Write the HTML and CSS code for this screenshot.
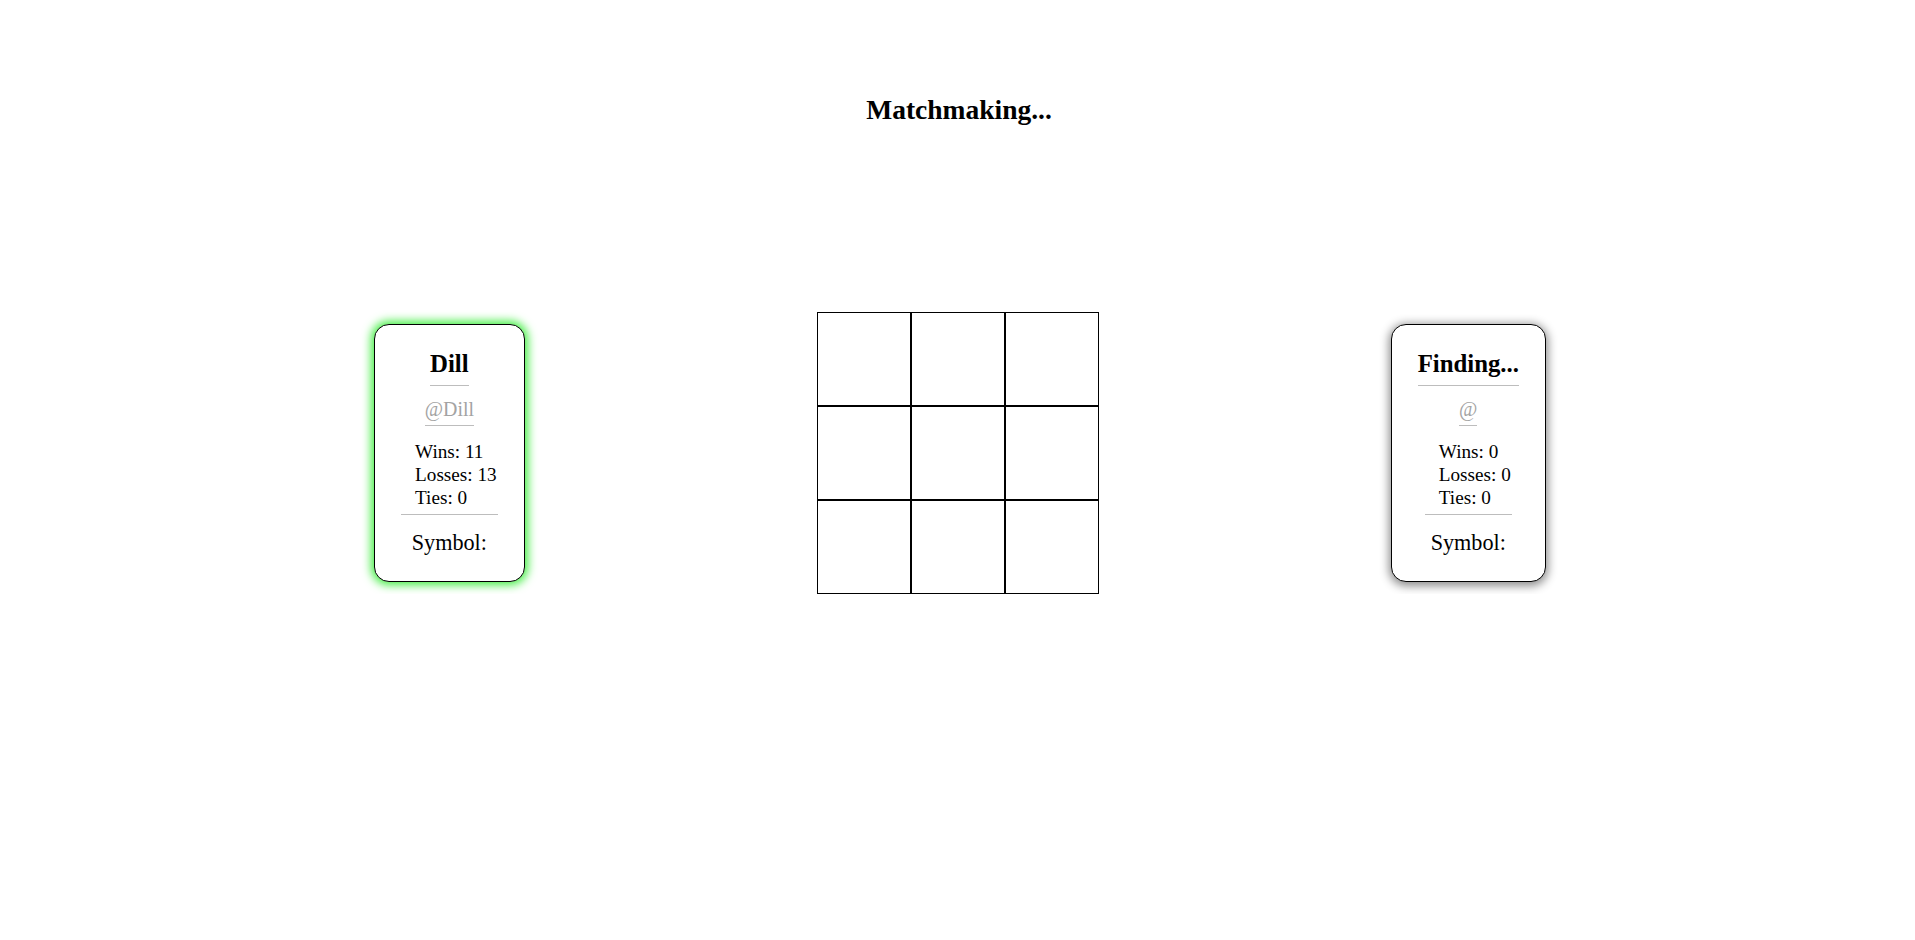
FILE: index.html
```html
<!DOCTYPE html>
<html>
<head>
<meta charset="utf-8">
<title>Matchmaking</title>
<link rel="stylesheet" href="styles.css">
</head>
<body>
<div class="page">
  <h1 class="title">Matchmaking...</h1>
  <div class="arena">
    <div class="card card-me">
      <div class="name">Dill</div>
      <div class="handle">@Dill</div>
      <div class="stats">
        <div>Wins: 11</div>
        <div>Losses: 13</div>
        <div>Ties: 0</div>
      </div>
      <div class="symbol">Symbol:</div>
    </div>
    <div class="board">
      <div class="cell"></div><div class="cell"></div><div class="cell"></div>
      <div class="cell"></div><div class="cell"></div><div class="cell"></div>
      <div class="cell"></div><div class="cell"></div><div class="cell"></div>
    </div>
    <div class="card card-opp">
      <div class="name">Finding...</div>
      <div class="handle">@</div>
      <div class="stats">
        <div>Wins: 0</div>
        <div>Losses: 0</div>
        <div>Ties: 0</div>
      </div>
      <div class="symbol">Symbol:</div>
    </div>
  </div>
</div>
</body>
</html>
```

FILE: styles.css
```css
html, body {
  margin: 0;
  padding: 0;
  background: #fff;
}
body {
  font-family: "Liberation Serif", "Times New Roman", serif;
  color: #000;
}
.page {
  padding-top: 94px;
  display: flex;
  flex-direction: column;
  align-items: center;
}
.title {
  margin: 0;
  font-size: 27.5px;
  font-weight: bold;
  line-height: 31px;
  text-align: center;
  padding-left: 3px;
}
.arena {
  margin-top: 187px;
  display: flex;
  align-items: center;
  justify-content: center;
  gap: 292px;
  padding-left: 5px;
}
.card {
  box-sizing: border-box;
  border: 1px solid #000;
  border-radius: 15px;
  padding: 25px 26px 26px;
  display: flex;
  flex-direction: column;
  align-items: center;
  background: #fff;
}
.card-me {
  box-shadow: 0 0 10px 3px #44ee44;
}
.card-opp {
  box-shadow: 0 2px 10px 2px rgba(0, 0, 0, 0.45);
}
.name {
  font-size: 24.8px;
  font-weight: bold;
  line-height: 28px;
  padding-bottom: 7px;
  border-bottom: 1px solid #bdbdbd;
}
.handle {
  margin-top: 12px;
  font-size: 19.9px;
  line-height: 22px;
  color: #a3a3a3;
  padding-bottom: 5px;
  border-bottom: 1px solid #bdbdbd;
}
.stats {
  margin-top: 14px;
  font-size: 19.2px;
  line-height: 23px;
  padding: 0 1px 5px 14px;
  border-bottom: 1px solid #bdbdbd;
}
.symbol {
  margin-top: 15px;
  font-size: 22.2px;
  line-height: 25px;
}
.board {
  display: grid;
  grid-template-columns: repeat(3, 94px);
  grid-template-rows: repeat(3, 94px);
}
.cell {
  box-sizing: border-box;
  border: 1px solid #000;
}
```
